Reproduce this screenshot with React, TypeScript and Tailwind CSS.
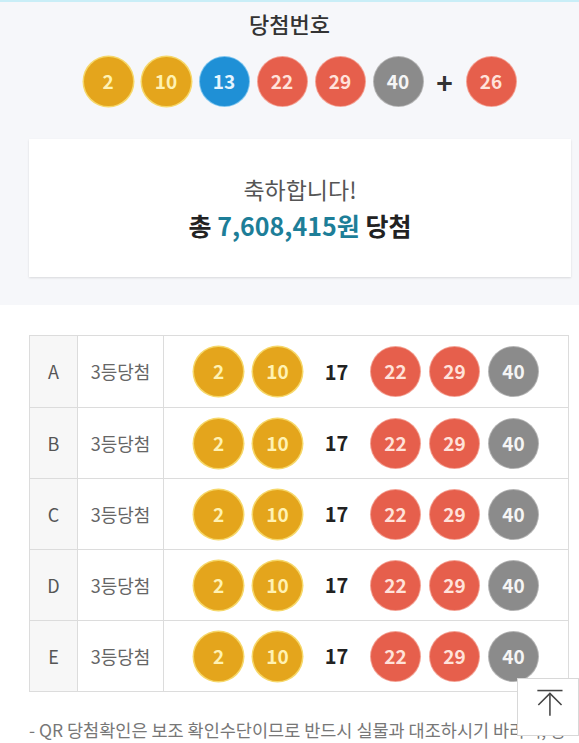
import type { ReactNode } from "react";

type BallColor = "yellow" | "blue" | "red" | "gray";

const ballStyles: Record<BallColor, string> = {
  yellow: "bg-[#e4a51c] text-[#fff2b3] shadow-[0_0_0_1.5px_#f6d769]",
  blue: "bg-[#1f90d6] text-[#e6f5ff] shadow-[0_0_0_1px_#7cc4ee]",
  red: "bg-[#e65f4c] text-[#ffe2da] shadow-[0_0_0_1px_#f3a193]",
  gray: "bg-[#8b8b8b] text-[#f5f5f5] shadow-[0_0_0_1px_#b5b5b5]",
};

function colorOf(n: number): BallColor {
  if (n <= 10) return "yellow";
  if (n <= 20) return "blue";
  if (n <= 30) return "red";
  return "gray";
}

function Ball({ n }: { n: number }) {
  return (
    <div
      className={`w-[49px] h-[49px] rounded-full flex items-center justify-center text-[19px] font-semibold shrink-0 ${ballStyles[colorOf(n)]}`}
    >
      {n}
    </div>
  );
}

function Cell({ children, className }: { children: ReactNode; className?: string }) {
  return <div className={`flex items-center ${className ?? ""}`}>{children}</div>;
}

const rows = ["A", "B", "C", "D", "E"];

export default function App() {
  return (
    <div
      className="relative w-[579px] h-[743px] overflow-hidden bg-white text-[#333]"
      style={{ fontFamily: '"Noto Sans CJK KR", "Noto Sans", sans-serif' }}
    >
      {/* 당첨번호 영역 */}
      <div className="bg-[#f6f7fa] border-t-2 border-[#c9eef7] h-[305px] pt-[6px]">
        <div className="text-center text-[22px] leading-[30px] font-medium text-[#333]">
          당첨번호
        </div>
        <div className="flex items-center justify-center gap-[9px] mt-[19px] pl-[20px]">
          {[2, 10, 13, 22, 29, 40].map((n) => (
            <Ball key={n} n={n} />
          ))}
          <span className="w-[26px] text-center text-[28px] leading-none font-bold text-[#333]">+</span>
          <Ball n={26} />
        </div>

        <div className="ml-[29px] mr-[8px] mt-[33px] h-[138px] bg-white shadow-[0_1px_2px_rgba(0,0,0,0.12)] flex flex-col items-center justify-center gap-[6px]">
          <div className="text-[23px] leading-[28px] text-[#555]">축하합니다!</div>
          <div className="text-[25px] leading-[32px] font-bold text-[#222]">
            총 <span className="text-[#1d7e98]">7,608,415원</span> 당첨
          </div>
        </div>
      </div>

      {/* 게임별 결과 */}
      <div className="pt-[30px] ml-[29px] mr-[10px]">
        <div className="border border-[#dcdcdc]">
          {rows.map((r, i) => (
            <div
              key={r}
              className={`grid grid-cols-[48px_86px_1fr] h-[71px] ${i > 0 ? "border-t border-[#dcdcdc]" : ""}`}
            >
              <Cell className="justify-center bg-[#f7f7f7] border-r border-[#dcdcdc] text-[18px] text-[#555]">
                {r}
              </Cell>
              <Cell className="justify-center border-r border-[#dcdcdc] text-[18px] text-[#666]">
                3등당첨
              </Cell>
              <Cell className="pl-[30px] gap-[10px]">
                <Ball n={2} />
                <Ball n={10} />
                <span className="w-[49px] text-center text-[20px] font-bold text-[#222]">17</span>
                <Ball n={22} />
                <Ball n={29} />
                <Ball n={40} />
              </Cell>
            </div>
          ))}
        </div>
        <div className="mt-[27px] text-[17.5px] leading-[22px] text-[#777] whitespace-nowrap">
          - QR 당첨확인은 보조 확인수단이므로 반드시 실물과 대조하시기 바라며, 당
        </div>
      </div>

      {/* 맨 위로 버튼 */}
      <button className="absolute left-[517px] top-[678px] w-[62px] h-[58px] bg-white border border-[#d8d8d8] flex items-center justify-center">
        <svg width="62" height="58" viewBox="0 0 62 58" fill="none" stroke="#444" strokeWidth="1.6">
          <line x1="20" y1="12" x2="46" y2="12" />
          <line x1="33" y1="15" x2="33" y2="38" />
          <polyline points="21,27 33,15 45,27" />
        </svg>
      </button>
    </div>
  );
}
